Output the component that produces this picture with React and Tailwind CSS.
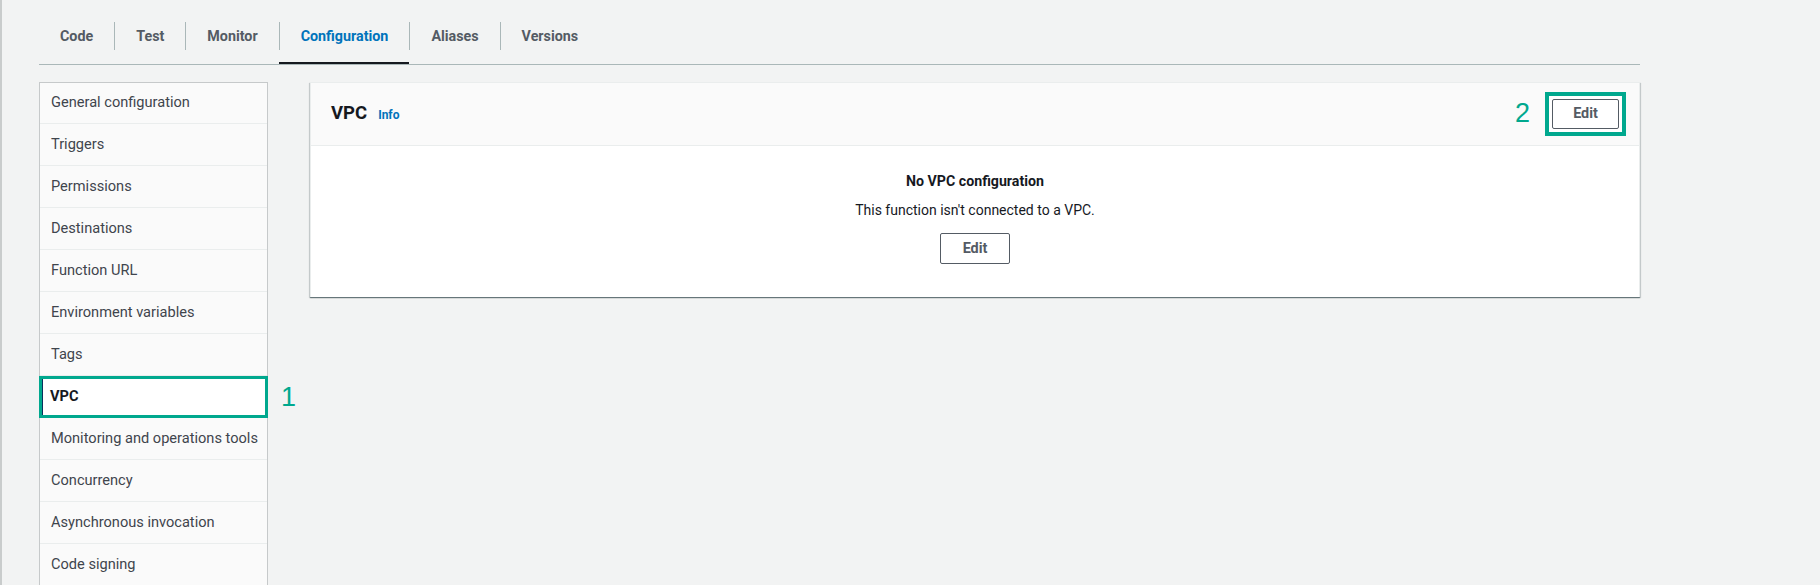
import React from 'react';

const TABS = ['Code', 'Test', 'Monitor', 'Configuration', 'Aliases', 'Versions'];

const NAV = [
  'General configuration',
  'Triggers',
  'Permissions',
  'Destinations',
  'Function URL',
  'Environment variables',
  'Tags',
  'VPC',
  'Monitoring and operations tools',
  'Concurrency',
  'Asynchronous invocation',
  'Code signing',
];

const font = { fontFamily: 'Roboto, "Liberation Sans", sans-serif' };

function Tabs() {
  return (
    <div className="flex h-[43px] border-b border-[#aab7b8]">
      {TABS.map((t, i) => {
        const active = t === 'Configuration';
        return (
          <div
            key={t}
            className={`flex h-[42px] flex-col ${active ? 'border-b-2 border-[#16191f]' : ''}`}
          >
            <div
              className={`flex h-[28px] items-center px-[21px] pt-px text-[14.3px] font-bold ${
                i > 0 ? 'border-l border-[#aab7b8]' : ''
              } ${active ? 'text-[#0073bb]' : 'text-[#545b64]'}`}
            >
              {t}
            </div>
          </div>
        );
      })}
    </div>
  );
}

function Sidebar() {
  return (
    <div className="flex w-[229px] shrink-0 flex-col border-x border-t border-[#c6c9ca] bg-[#fafafa]">
      {NAV.map((item, i) => {
        if (item === 'VPC') {
          return (
            <div key={item} className="relative -mx-px h-[42px] border-[3px] border-[#00a88e] bg-white">
              <div className="flex h-full items-center border-l border-[#0b2f5c] pl-[7px] text-[14.6px] font-bold text-[#16191f]">
                VPC
              </div>
              <span
                className="absolute left-[calc(100%+16px)] top-1/2 -translate-y-1/2 text-[27px] font-normal leading-none text-[#00a88e]"
                style={{ fontFamily: '"Liberation Sans", Arial, sans-serif' }}
              >
                1
              </span>
            </div>
          );
        }
        return (
          <div
            key={item}
            className={`flex ${i === 0 ? 'h-[41px]' : 'h-[42px]'} items-center border-b border-[#eaeded] pl-[11px] text-[14.6px] text-[#3f454d]`}
          >
            {item}
          </div>
        );
      })}
      <div className="h-[40px]" />
    </div>
  );
}

function EditButton({ className = '' }) {
  return (
    <button
      className={`flex items-center justify-center rounded-[2px] border border-[#545b64] bg-white text-[14.4px] font-bold text-[#545b64] ${className}`}
    >
      Edit
    </button>
  );
}

function VpcPanel() {
  return (
    <div className="w-[1330px] self-start border border-b-0 border-[#eaeded] bg-white shadow-[0_1px_1px_0_rgba(0,28,36,0.45),1px_1px_1px_0_rgba(0,28,36,0.12),-1px_1px_1px_0_rgba(0,28,36,0.12)]">
      <div className="flex h-[63px] items-center justify-between border-b border-[#eaeded] bg-[#fafafa] pb-[1px] pl-[20px] pr-[13px]">
        <div className="flex items-baseline">
          <h2 className="text-[18.5px] font-bold text-[#16191f]">VPC</h2>
          <span className="ml-[11px] text-[12px] font-bold text-[#0073bb]">Info</span>
        </div>
        <div className="flex items-center gap-[15px]">
          <span
            className="text-[27px] font-normal leading-none text-[#00a88e]"
            style={{ fontFamily: '"Liberation Sans", Arial, sans-serif' }}
          >
            2
          </span>
          <div className="border-[4px] border-[#00a88e] bg-white p-[3px]">
            <EditButton className="h-[30px] w-[67px]" />
          </div>
        </div>
      </div>
      <div className="flex flex-col items-center pt-[25px] pb-[33px]">
        <h3 className="text-[14.2px] font-bold leading-5 text-[#16191f]">No VPC configuration</h3>
        <p className="mt-[9px] text-[14px] leading-5 text-[#16191f]">This function isn't connected to a VPC.</p>
        <EditButton className="mt-[13px] h-[31px] w-[70px]" />
      </div>
    </div>
  );
}

export default function App() {
  return (
    <div
      className="h-[585px] w-[1820px] overflow-hidden border-l-2 border-[#c9cccc] bg-[#f2f3f3] pl-[37px] pt-[22px]"
      style={font}
    >
      <div className="w-[1601px]">
        <Tabs />
        <div className="mt-[17px] flex gap-[42px]">
          <Sidebar />
          <VpcPanel />
        </div>
      </div>
    </div>
  );
}
